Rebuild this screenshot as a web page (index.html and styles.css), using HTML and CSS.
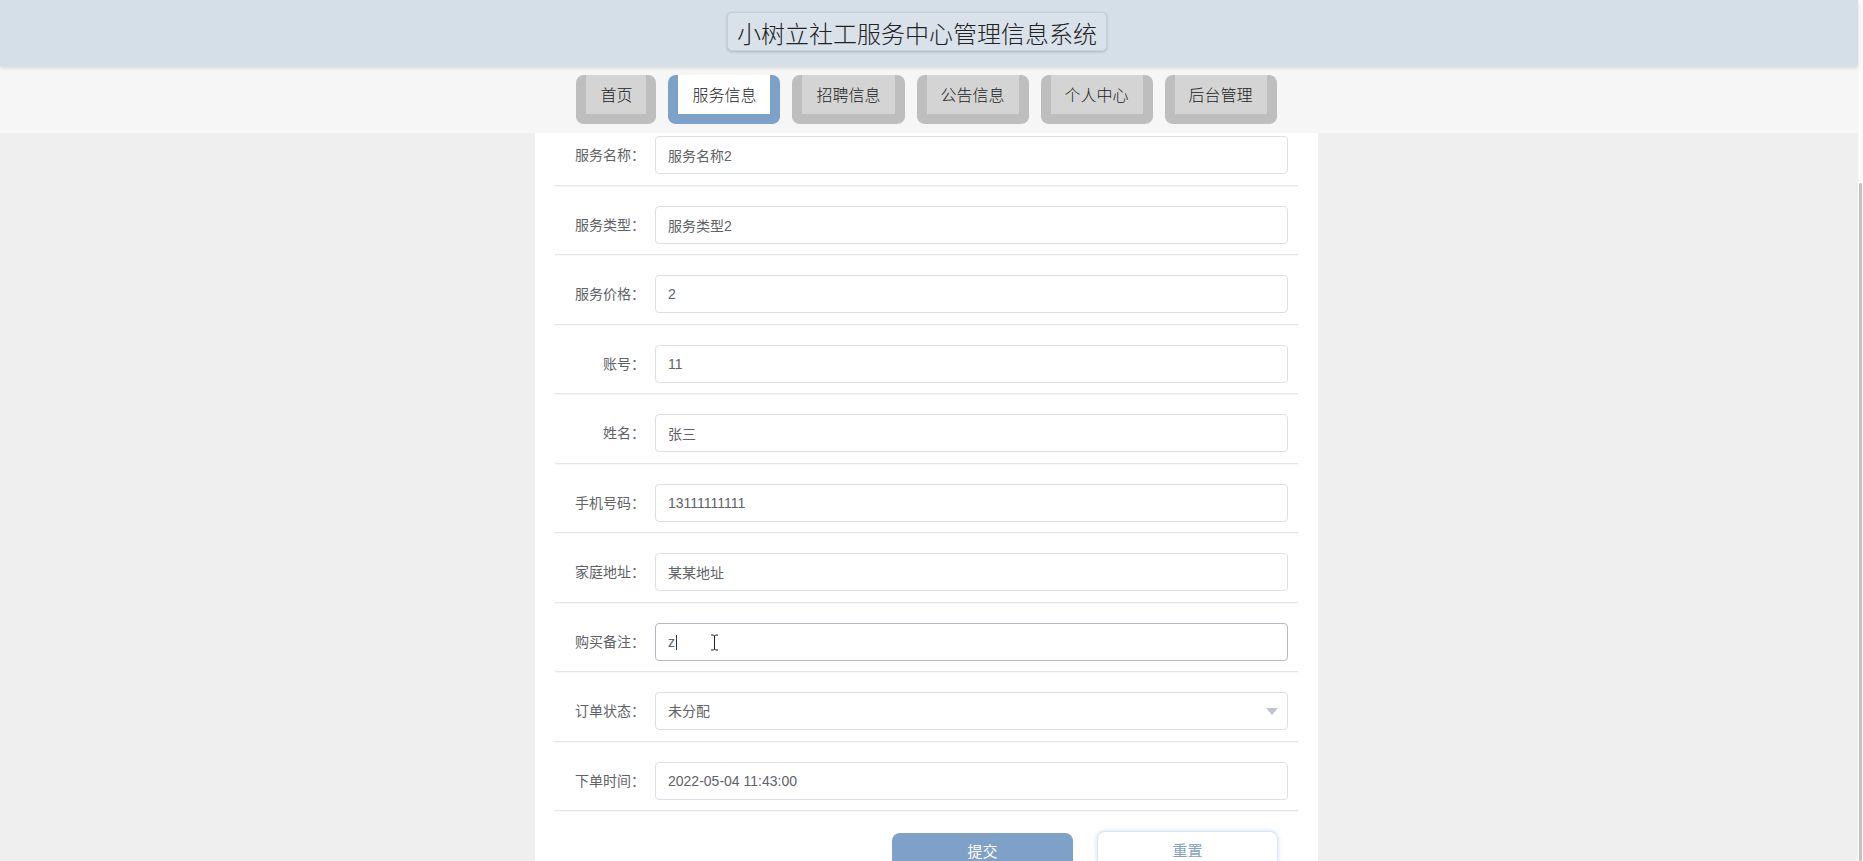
FILE: index.html
```html
<!DOCTYPE html>
<html>
    <head>
        <meta charset="utf-8">
        <link rel="stylesheet" href="styles.css">
        <title>小树立社工服务中心管理信息系统</title>
    </head>
    <body>
        <div class="page">
            <div class="topbar">
                <header class="header">
                    <div class="site-title">小树立社工服务中心管理信息系统</div>
                </header>
                <nav class="menu">
                    <a class="menu-item" href="#">首页</a>
                    <a class="menu-item active" href="#">服务信息</a>
                    <a class="menu-item" href="#">招聘信息</a>
                    <a class="menu-item" href="#">公告信息</a>
                    <a class="menu-item" href="#">个人中心</a>
                    <a class="menu-item" href="#">后台管理</a>
                </nav>
            </div>

            <main class="content">
                <form class="panel">
                    <div class="row">
                        <label class="row-label">服务名称：</label>
                        <input class="field" name="fuwumingcheng" value="服务名称2">
                    </div>
                    <div class="row">
                        <label class="row-label">服务类型：</label>
                        <input class="field" name="fuwuleixing" value="服务类型2">
                    </div>
                    <div class="row">
                        <label class="row-label">服务价格：</label>
                        <input class="field" name="fuwujiage" value="2">
                    </div>
                    <div class="row">
                        <label class="row-label">账号：</label>
                        <input class="field" name="zhanghao" value="11">
                    </div>
                    <div class="row">
                        <label class="row-label">姓名：</label>
                        <input class="field" name="xingming" value="张三">
                    </div>
                    <div class="row">
                        <label class="row-label">手机号码：</label>
                        <input class="field" name="shoujihaoma" value="13111111111">
                    </div>
                    <div class="row">
                        <label class="row-label">家庭地址：</label>
                        <input class="field" name="jiatingdizhi" value="某某地址">
                    </div>
                    <div class="row">
                        <label class="row-label">购买备注：</label>
                        <div class="field-wrap">
                            <input class="field focused" name="goumaibeizhu" value="z">
                            <span class="caret"></span>
                            <svg class="ibeam" width="9" height="17" viewBox="0 0 9 17">
                                <path d="M1 1h2.5l1 1 1-1H8M4.5 2v13M1 16h2.5l1-1 1 1H8" fill="none" stroke="#fff" stroke-width="2.4"/>
                                <path d="M1 1h2.5l1 1 1-1H8M4.5 2v13M1 16h2.5l1-1 1 1H8" fill="none" stroke="#222" stroke-width="1"/>
                            </svg>
                        </div>
                    </div>
                    <div class="row">
                        <label class="row-label">订单状态：</label>
                        <div class="field-wrap">
                            <select class="field select" name="dingdanzhuangtai">
                                <option>未分配</option>
                                <option>已分配</option>
                            </select>
                            <svg class="arrow" width="12" height="7" viewBox="0 0 12 7">
                                <path d="M0 0h12L6 7z" fill="#c0c4cc"/>
                            </svg>
                        </div>
                    </div>
                    <div class="row">
                        <label class="row-label">下单时间：</label>
                        <input class="field" name="xiadanshijian" value="2022-05-04 11:43:00">
                    </div>

                    <div class="actions">
                        <button type="button" class="btn btn-primary">提交</button>
                        <button type="reset" class="btn btn-plain">重置</button>
                    </div>
                </form>
            </main>
        </div>
        <div class="scrollbar"><div class="thumb"></div></div>
    </body>
</html>
```

FILE: styles.css
```css
html, body {
    margin: 0;
    height: 100%;
}
body {
    display: flex;
    overflow: hidden;
    background: #fafafa;
    font-family: "Liberation Sans", "Noto Sans CJK SC", sans-serif;
    color: #333;
}
.page {
    flex: 1;
    display: flex;
    flex-direction: column;
    min-width: 0;
}

/* top title + menu */
.topbar {
    flex: none;
}
.header {
    position: relative;
    z-index: 1;
    height: 66px;
    box-sizing: border-box;
    padding: 12px 24px 0 0;
    display: flex;
    justify-content: center;
    align-items: flex-start;
    background: #d5dfe8;
    box-shadow: 0 2px 4px rgba(0, 0, 0, 0.12);
}
.site-title {
    height: 39px;
    line-height: 39px;
    box-sizing: border-box;
    padding: 0 9px;
    font-size: 24px;
    font-family: "Noto Sans CJK SC", sans-serif;
    font-weight: 300;
    color: #222;
    background: #d9e2ea;
    border: 1px solid #c6cfd9;
    border-radius: 5px;
    box-shadow: 0 1px 3px rgba(0, 0, 0, 0.18);
}
.menu {
    height: 67px;
    box-sizing: border-box;
    padding: 9px 5px 0 0;
    display: flex;
    justify-content: center;
    align-items: flex-start;
    gap: 12px;
    background: #f6f6f6;
}
.menu-item {
    display: block;
    padding: 0 14px;
    line-height: 39px;
    font-size: 16px;
    font-family: "Noto Sans CJK SC", sans-serif;
    font-weight: 300;
    color: #222;
    text-decoration: none;
    background: #d4d4d4;
    border-style: solid;
    border-width: 0 10px 10px 10px;
    border-color: #bebebe;
    border-radius: 8px;
}
.menu-item.active {
    background: #fff;
    border-color: #7ea1c9;
}

/* form area */
.content {
    flex: 1;
    overflow: hidden;
    padding-right: 5px;
    background: #efefef;
}
.panel {
    width: 783px;
    box-sizing: border-box;
    margin: -17px auto 0;   /* list scrolled a little */
    padding: 0 20px 40px;
    background: #fff;
}
.row {
    height: 69.5px;
    box-sizing: border-box;
    padding: 20px 10px 0 0;
    display: flex;
    align-items: flex-start;
    border-bottom: 1px solid #e3e5e8;
    box-shadow: 0 1px 1px rgba(0, 0, 0, 0.03);
}
.row-label {
    width: 90px;
    margin-right: 10px;
    flex: none;
    text-align: right;
    line-height: 38px;
    font-size: 14px;
    color: #606266;
}
.field-wrap {
    flex: 1;
    position: relative;
    display: flex;
}
.field {
    flex: 1;
    min-width: 0;
    height: 38px;
    box-sizing: border-box;
    padding: 0 12px;
    border: 1px solid #dcdfe6;
    border-radius: 4px;
    background: #fff;
    font-family: "Liberation Sans", "Noto Sans CJK SC", sans-serif;
    font-size: 14px;
    color: #606266;
    outline: none;
}
.field.focused {
    border-color: #b4b8c0;
}
.select {
    appearance: none;
    -webkit-appearance: none;
}
.arrow {
    position: absolute;
    right: 10px;
    top: 16px;
}
.caret {
    position: absolute;
    left: 21px;
    top: 12px;
    width: 1px;
    height: 15px;
    background: #333;
}
.ibeam {
    position: absolute;
    left: 55px;
    top: 11px;
}

.actions {
    display: flex;
    justify-content: flex-end;
    gap: 24px;
    padding: 22px 20px 0 0;
}
.btn {
    width: 181px;
    height: 38px;
    padding: 0 0 2px;
    border-radius: 8px;
    font-family: "Noto Sans CJK SC", sans-serif;
    font-size: 15px;
    line-height: 20px;
    cursor: pointer;
}
.btn-primary {
    border: none;
    background: #7fa1c8;
    color: #fff;
}
.btn-plain {
    margin-top: -2px;
    height: 40px;
    border: 1px solid #dfe5ee;
    background: #fff;
    color: #7fa1c8;
    box-shadow: 0 0 5px rgba(127, 161, 200, 0.35);
}

/* thin page scrollbar */
.scrollbar {
    width: 5px;
    flex: none;
    display: flex;
    flex-direction: column;
    background: #fafafa;
}
.thumb {
    flex: 1;
    margin: 183px 1px 0 1px;
    background: #c1c1c1;
    border-radius: 2px;
}
```
